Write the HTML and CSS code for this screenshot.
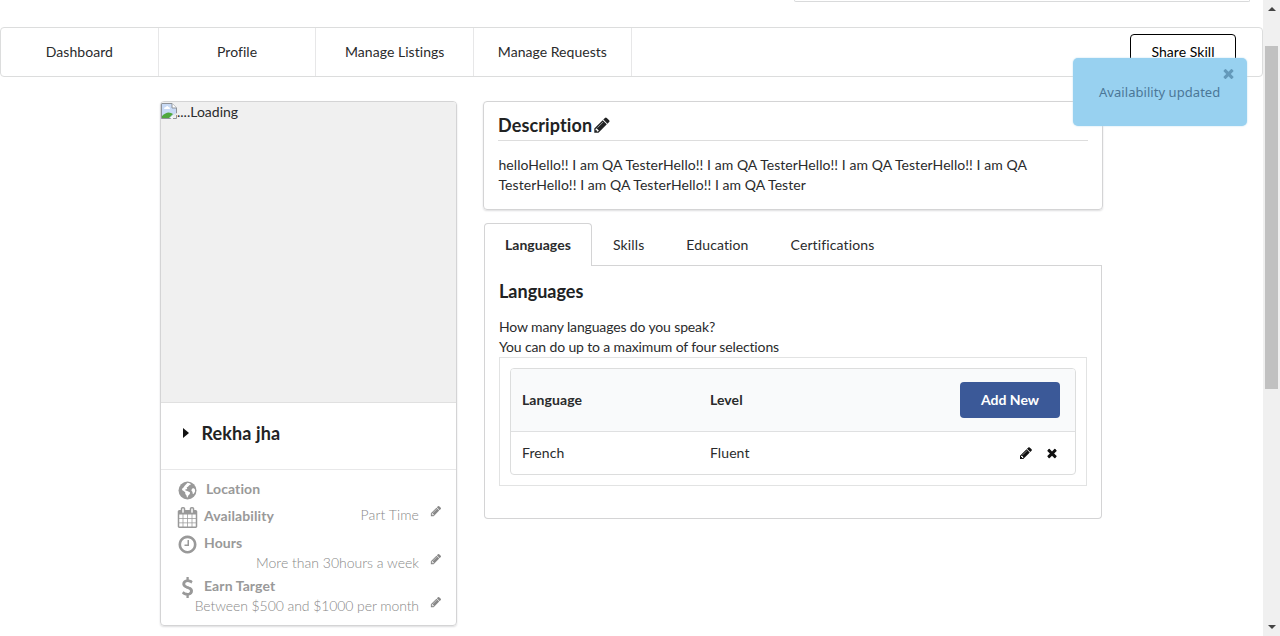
FILE: index.html
```html
<!DOCTYPE html>
<html lang="en">
<head>
<meta charset="utf-8">
<title>Profile</title>
<link rel="stylesheet" href="styles.css">
</head>
<body>
<svg class="defs" aria-hidden="true">
  <symbol id="pencil" viewBox="0 0 1792 1792"><path d="M491 1536l91-91-235-235-91 91v107h128v128h107zm523-928q0-22-22-22-10 0-17 7l-542 542q-7 7-7 17 0 22 22 22 10 0 17-7l542-542q7-7 7-17zm-54-192l416 416-832 832h-416v-416zm683 96q0 53-37 90l-166 166-416-416 166-165q36-38 90-38 53 0 91 38l235 234q37 39 37 91z"/></symbol>
  <symbol id="times" viewBox="0 0 1792 1792"><path d="M1490 1322q0 40-28 68l-136 136q-28 28-68 28t-68-28l-294-294-294 294q-28 28-68 28t-68-28l-136-136q-28-28-28-68t28-68l294-294-294-294q-28-28-28-68t28-68l136-136q28-28 68-28t68 28l294 294 294-294q28-28 68-28t68 28l136 136q28 28 28 68t-28 68l-294 294 294 294q28 28 28 68z"/></symbol>
  <symbol id="clock" viewBox="0 0 1792 1792"><path d="M1024 544v448q0 14-9 23t-23 9h-320q-14 0-23-9t-9-23v-64q0-14 9-23t23-9h224v-352q0-14 9-23t23-9h64q14 0 23 9t9 23zm416 352q0-148-73-273t-198-198-273-73-273 73-198 198-73 273 73 273 198 198 273 73 273-73 198-198 73-273zm224 0q0 209-103 385.5t-279.5 279.5-385.5 103-385.5-103-279.5-279.5-103-385.5 103-385.5 279.5-279.5 385.5-103 385.5 103 279.5 279.5 103 385.5z"/></symbol>
  <symbol id="calendar" viewBox="0 0 1792 1792"><path d="M192 1664h288v-288h-288v288zm352 0h320v-288h-320v288zm-352-352h288v-320h-288v320zm352 0h320v-320h-320v320zm-352-384h288v-288h-288v288zm736 736h320v-288h-320v288zm-384-736h320v-288h-320v288zm768 736h288v-288h-288v288zm-384-352h320v-320h-320v320zm-352-864v-288q0-13-9.500-22.500t-22.500-9.500h-64q-13 0-22.500 9.500t-9.500 22.500v288q0 13 9.500 22.500t22.500 9.500h64q13 0 22.500-9.500t9.500-22.500zm736 864h288v-320h-288v320zm-384-384h320v-288h-320v288zm384 0h288v-288h-288v288zm32-480v-288q0-13-9.500-22.500t-22.500-9.500h-64q-13 0-22.500 9.500t-9.500 22.500v288q0 13 9.500 22.500t22.500 9.500h64q13 0 22.500-9.500t9.500-22.500zm384-64v1280q0 52-38 90t-90 38h-1408q-52 0-90-38t-38-90v-1280q0-52 38-90t90-38h128v-96q0-66 47-113t113-47h64q66 0 113 47t47 113v96h384v-96q0-66 47-113t113-47h64q66 0 113 47t47 113v96h128q52 0 90 38t38 90z"/></symbol>
  <symbol id="dollar" viewBox="0 0 1792 1792"><path d="M1362 1185q0 153-99.500 263.500t-258.500 136.500v175q0 14-9 23t-23 9h-135q-13 0-22.500-9.500t-9.500-22.500v-175q-66-9-127.500-31t-101.500-44.500-74-48-46.500-37.500-17.500-18q-17-21-2-41l103-135q7-10 23-12 15-2 24 9l2 2q113 99 243 125 37 8 74 8 81 0 142.500-43t61.500-122q0-28-15-53t-33.500-42-58.500-37.500-66-32-80-32.500q-39-16-61.500-25t-61.500-26.500-62.500-31-56.500-35.500-53.500-42.500-43.500-49-35.500-58-21-66.500-8.500-78q0-138 98-242t255-134v-180q0-13 9.500-22.500t22.500-9.500h135q14 0 23 9t9 23v176q57 6 110.500 23t87 33.500 63.500 37.500 39 29 15 14q17 18 5 38l-81 146q-8 15-23 16-14 3-27-7-3-3-14.500-12t-39-26.500-58.500-32-74.500-26-85.500-11.500q-95 0-155 43t-60 111q0 26 8.500 48t29.500 41.500 39.500 33 56 31 60.500 27 70 27.500q53 20 81 31.500t76 35 75.500 42.500 62 50 53 63.500 31.500 76.500 13 94z"/></symbol>
  <symbol id="globe" viewBox="0 0 21 21"><circle cx="10.500" cy="10.500" r="9"/><path fill="#fff" d="M10.500 2.800 12.600 3.200l1.500 1-1.800 1-1.400 1.600-1.300.7.700 1.100-.8.700-1.300.1.300 1 1.700.5 1.600.8 1.300.9-.3 1.500-1.500 1.400-.7 1.900-.7-.1-.4-1.800-1.200-1.600-.1-1.700-1.600-1.300-1.600-1 .3-1.300 1.200-1.200 1-1.500.9-1zM15.200 8.500l1.700-.3 1.100 1.400v2.100l-1.500 2.300-.8-.2-.2-1.900-1.200-1.700z"/></symbol>
</svg>
<div class="window">
  <div class="page">
    <div class="search"></div>
    <nav class="menu">
      <a class="item">Dashboard</a><a class="item">Profile</a><a class="item">Manage Listings</a><a class="item">Manage Requests</a>
      <button class="share">Share Skill</button>
    </nav>
    <main class="content">
      <aside class="card">
        <div class="photo">
          <svg class="broken" viewBox="0 0 16 16"><path d="M.5.5h10.500l4.500 4.500v5L9.500 15.500h-9z" fill="#c8daf5" stroke="#8f9399"/><path d="M11 .5V5h4.500" fill="#fff" stroke="#8f9399"/><path d="M3 6q0-2 2-2 1-2 2.500 0Q9 4 9 6z" fill="#fff"/><path d="M1 15v-2q5-5 9-3l2 1-4 4z" fill="#4fa83d"/><path d="M9 15l6-5v1l-4 4z" fill="#fff"/><path d="M12 15.500h3.500V12" fill="none" stroke="#8f9399"/></svg><span>....Loading</span>
        </div>
        <div class="name"><i class="caret"></i><span>Rekha jha</span></div>
        <div class="facts">
          <div class="fact location"><svg class="icon"><use href="#globe"/></svg><b>Location</b></div>
          <div class="fact"><svg class="icon"><use href="#calendar"/></svg><b>Availability</b><span class="value inline">Part Time<svg class="edit"><use href="#pencil"/></svg></span></div>
          <div class="fact"><svg class="icon"><use href="#clock"/></svg><b>Hours</b></div>
          <div class="value">More than 30hours a week<svg class="edit"><use href="#pencil"/></svg></div>
          <div class="fact earn"><svg class="icon"><use href="#dollar"/></svg><b>Earn Target</b></div>
          <div class="value tight">Between $500 and $1000 per month<svg class="edit"><use href="#pencil"/></svg></div>
        </div>
      </aside>
      <div class="details">
        <section class="description">
          <h3>Description<svg class="pen"><use href="#pencil"/></svg></h3>
          <p>helloHello!! I am QA TesterHello!! I am QA TesterHello!! I am QA TesterHello!! I am QA TesterHello!! I am QA TesterHello!! I am QA Tester</p>
        </section>
        <section class="tabbed">
          <div class="tabs"><a class="tab active">Languages</a><a class="tab">Skills</a><a class="tab">Education</a><a class="tab">Certifications</a></div>
          <div class="panel">
            <h3>Languages</h3>
            <p>How many languages do you speak?<br>You can do up to a maximum of four selections</p>
            <div class="frame">
              <div class="table">
                <div class="row head"><span>Language</span><span>Level</span><button class="add">Add New</button></div>
                <div class="row"><span>French</span><span>Fluent</span><span class="actions"><svg><use href="#pencil"/></svg><svg><use href="#times"/></svg></span></div>
              </div>
            </div>
          </div>
        </section>
      </div>
    </main>
    <div class="toast">Availability updated<svg><use href="#times"/></svg></div>
  </div>
  <div class="scrollbar"><i class="up"></i><div class="thumb"></div><i class="down"></i></div>
</div>
</body>
</html>
```
FILE: styles.css
```css
* { box-sizing: border-box; }
body { margin: 0; background: #fff; color: #2a2b2c; font: 14px/20px Lato, sans-serif; font-variant-ligatures: none; overflow: hidden; }
h3, p { margin: 0; }
svg { fill: currentColor; display: block; flex: none; }
button { font: inherit; padding: 0; }
.defs { display: none; }
.window { display: flex; width: 1280px; height: 636px; overflow: hidden; }
.page { position: relative; width: 1263px; }
.search { height: 2px; width: 456px; margin-left: 794px; border: 1px solid #d9dadb; border-top: 0; border-radius: 0 0 4px 4px; }
.menu { display: flex; height: 50px; margin-top: 25px; border: 1px solid #dcdddd; border-radius: 4px; }
.item { width: 157.700px; display: flex; align-items: center; justify-content: center; border-right: 1px solid #e7e7e8; letter-spacing: .040px; }
.share { width: 106px; height: 36px; margin: 6px 26px 0 auto; border: 1px solid #000; border-radius: 4px; background: #fff; color: #000; letter-spacing: .050px; }
.content { display: flex; align-items: flex-start; gap: 26px; padding: 24px 160px; }
.card { width: 297px; height: 525px; flex: none; border: 1px solid #d4d4d5; border-radius: 4px; box-shadow: 0 1px 2px #dededf; overflow: hidden; }
.photo { display: flex; height: 300px; background: #f0f0f0; }
.broken { width: 16px; height: 16px; margin-top: 1px; }
.name { display: flex; align-items: center; height: 67px; padding: 0 0 7px 22px; border-top: 1px solid #e0e0e0; font-size: 18px; font-weight: 700; letter-spacing: .100px; color: #212223; }
.caret { border-left: 6px solid #111; border-top: 5px solid transparent; border-bottom: 5px solid transparent; margin-right: 12.500px; }
.facts { border-top: 1px solid #e8e8e9; padding: 5px 16px 0; color: #999; }
.fact { display: flex; height: 27px; align-items: center; }
.fact b { margin-left: 6px; letter-spacing: .100px; }
.fact.location b { margin-left: 8px; }
.icon { width: 21px; height: 21px; margin-top: 3px; }
.value { display: flex; justify-content: flex-end; align-items: flex-start; font-weight: 300; color: #888; height: 20px; margin-top: -3px; }
.value.tight { letter-spacing: -.080px; }
.value.inline { margin: -2px 0 0 auto; letter-spacing: .100px; }
.edit { width: 12px; height: 12px; margin: 0 -2px 0 11px; }
.earn { height: 26px; }
.details { width: 620px; }
.description { height: 109px; padding: 11px 14px; border: 1px solid #d4d4d5; border-radius: 4px; box-shadow: 0 1px 2px #dededf; }
.description h3 { display: flex; align-items: center; height: 28px; border-bottom: 1px solid #ddd; padding-bottom: 3px; letter-spacing: .120px; }
h3 { font-size: 18px; line-height: 24px; color: #212223; }
.pen { width: 18px; height: 18px; margin-left: 1px; }
.description p { margin-top: 14px; padding-left: .500px; letter-spacing: .055px; }
.tabbed { margin: 13px 1px 0; }
.tabs { display: flex; height: 43px; border-bottom: 1px solid #d4d4d5; }
.tab { padding: 12px 21px 0; letter-spacing: .120px; }
.tab.active { width: 108px; font-weight: 700; letter-spacing: .030px; height: 43px; background: #fff; border: 1px solid #d4d4d5; border-bottom: 0; border-radius: 4px 4px 0 0; padding: 11px 20px 0; }
.panel { height: 253px; padding: 13px 14px; border: 1px solid #d4d4d5; border-top: 0; border-radius: 0 0 4px 4px; }
.panel p { margin-top: 14px; letter-spacing: -.140px; }
.frame { height: 129px; border: 1px solid #e2e3e3; padding: 10px; }
.table { height: 107px; border: 1px solid #dcdddd; border-radius: 4px; overflow: hidden; }
.row { display: grid; grid-template-columns: 188px 1fr auto; align-items: center; height: 42px; padding: 0 15px 0 11px; letter-spacing: .080px; }
.row.head { height: 63px; background: #f9fafb; border-bottom: 1px solid #dfe0e1; font-weight: 700; }
.add { width: 100px; height: 36px; border: 0; border-radius: 4px; background: #3b5998; color: #fff; font-weight: 700; }
.actions { display: flex; gap: 12px; margin-right: 1px; color: #111; }
.actions svg { width: 14px; height: 14px; }
.toast { position: absolute; left: 1073px; top: 58px; width: 174px; height: 68px; padding: 24px 0 0 26px; border-radius: 5px; background: #98d1f0; color: #4b7797; font-family: "Noto Sans", sans-serif; font-size: 13px; letter-spacing: .050px; box-shadow: 0 0 2px #b9dcef; white-space: nowrap; }
.toast svg { position: absolute; top: 8px; right: 11px; width: 15px; height: 15px; fill: #6499ba; }
.scrollbar { width: 17px; height: 636px; background: #f0f0f0; display: flex; flex-direction: column; align-items: center; }
.up, .down { border-left: 4px solid transparent; border-right: 4px solid transparent; }
.up { border-bottom: 4px solid #444; margin-top: 7px; }
.down { border-top: 4px solid #444; margin: auto 0 7px; }
.thumb { width: 13px; height: 343px; margin-top: 35px; background: #c1c1c1; }
```
